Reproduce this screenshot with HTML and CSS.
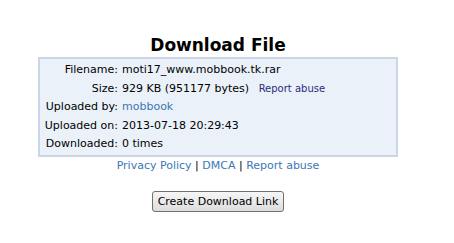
FILE: index.html
```html
<!DOCTYPE html>
<html lang="en">
<head>
    <meta charset="UTF-8">
    <title>Download File</title>
    <link rel="stylesheet" href="styles.css">
</head>
<body>
    <div class="download-container">
        <h2>Download File</h2>
        <div class="file-info">
            <div class="row">
                <span class="label">Filename:</span>
                <span class="value">moti17_www.mobbook.tk.rar</span>
            </div>
            <div class="row">
                <span class="label">Size:</span>
                <span class="value">929 KB (951177 bytes) <a href="#" class="abuse">Report abuse</a></span>
            </div>
            <div class="row">
                <span class="label">Uploaded by:</span>
                <span class="value"><a href="#">mobbook</a></span>
            </div>
            <div class="row">
                <span class="label">Uploaded on:</span>
                <span class="value">2013-07-18 20:29:43</span>
            </div>
            <div class="row">
                <span class="label">Downloaded:</span>
                <span class="value">0 times</span>
            </div>
        </div>
        <div class="footer-links">
            <a href="#">Privacy Policy</a> | <a href="#">DMCA</a> | <a href="#">Report abuse</a>
        </div>
        <div class="actions">
            <button>Create Download Link</button>
        </div>
    </div>
</body>
</html>
```

FILE: styles.css
```css
* {
    margin: 0;
    padding: 0;
    box-sizing: border-box;
}

body {
    background-color: #fff;
    color: #000;
    font-family: 'DejaVu Sans', Verdana, sans-serif;
    font-size: 11px;
    margin: 8px;
}

a {
    color: #3a78b5;
    text-decoration: none;
}

.download-container {
    width: 360px;
    margin-left: 30px;
    padding-top: 26px;
    text-align: center;
}

.download-container h2 {
    font-family: 'DejaVu Sans', Verdana, sans-serif;
    font-size: 17px;
    font-weight: 700;
    line-height: 23px;
}

.file-info {
    background-color: #ebf1f9;
    border: 2px solid #cad6e8;
    padding: 2px 0 1px;
    text-align: left;
}

.file-info .row {
    display: grid;
    grid-template-columns: 78px 1fr;
    column-gap: 4px;
    line-height: 18.5px;
}

.file-info .label {
    text-align: right;
}

.file-info .abuse {
    color: #2c2c7c;
    font-size: 10px;
    margin-left: 6px;
}

.footer-links {
    line-height: 17px;
    color: #000;
}

.actions {
    margin-top: 17px;
}

.actions button {
    font-family: 'DejaVu Sans', Verdana, sans-serif;
    font-size: 11px;
    padding: 3px 5px;
    background: linear-gradient(#f6f6f6, #dddddd);
    border: 1px solid #707070;
    border-radius: 3px;
    color: #000;
}
```
